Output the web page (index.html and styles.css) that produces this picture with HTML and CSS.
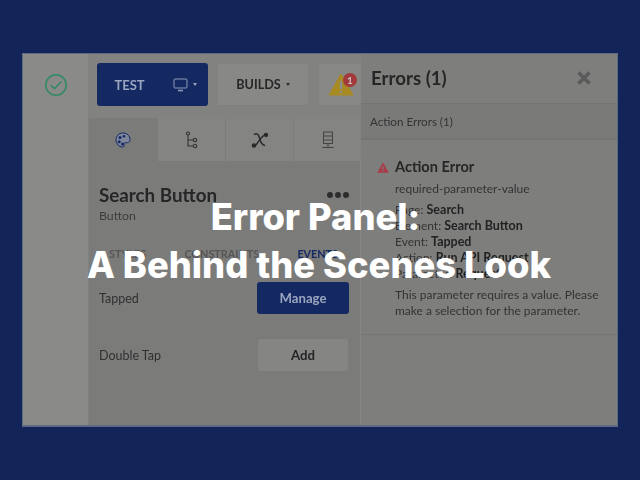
FILE: index.html
```html
<!DOCTYPE html>
<html lang="en">
<head>
<meta charset="utf-8">
<title>Error Panel: A Behind the Scenes Look</title>
<link rel="stylesheet" href="styles.css">
</head>
<body>
<div class="frame">
  <div class="topbar">
    <div class="status">
      <svg width="24" height="24" viewBox="0 0 24 24" fill="none" stroke="#2f8a62" stroke-width="1.5"><circle cx="12" cy="12" r="10.2"/><path d="M6.8 12.2l3.6 3.6 7-7.2"/></svg>
    </div>
    <div class="test">
      <span class="test-label">TEST</span>
      <span class="test-device">
        <svg width="16" height="14" viewBox="0 0 16 14" fill="none" stroke="#8d9ab8" stroke-width="1"><rect x="1" y="1" width="13" height="9" rx="1"/><path d="M5 12.5h5" stroke-width="1.6"/></svg>
        <i class="caret caret-light"></i>
      </span>
    </div>
    <div class="builds">BUILDS <i class="caret"></i></div>
    <div class="alert">
      <svg width="26" height="23" viewBox="0 0 26 23"><path d="M13 1L25 22H1z" fill="#a88a22" stroke="#a88a22" stroke-linejoin="round"/><path d="M13 8v8" stroke="#8d8d8d" stroke-width="2.4"/><circle cx="13" cy="19" r="1.3" fill="#8d8d8d"/></svg>
      <span class="badge">1</span>
    </div>
  </div>
  <div class="rail"></div>
  <div class="inspector">
    <div class="tabs">
      <div class="tab tab-active">
        <svg width="16" height="16" viewBox="0 0 16 16"><path d="M8 1C3.5 1 1 4.300 1 8s3 7 6.500 7c2 0 1.800-1.600 1.500-2.600-.3-1.100.5-1.900 1.800-1.700 2 .3 4.200-.2 4.200-3C15 3.600 12 1 8 1z" fill="#7d8599" stroke="#16296a"/><circle cx="5" cy="5.500" r="1.500" fill="#16296a"/><circle cx="9" cy="4.200" r="1.300" fill="#16296a"/><circle cx="4.200" cy="9.800" r="1.500" fill="#16296a"/><circle cx="7.500" cy="12" r="1.500" fill="#16296a"/></svg>
      </div>
      <div class="tab">
        <svg width="14" height="18" viewBox="0 0 14 18" fill="none" stroke="#333" stroke-width="1.100"><circle cx="3" cy="2.500" r="1.500"/><path d="M3 4v11h5M3 9h5"/><circle cx="10" cy="9" r="1.700"/><circle cx="10" cy="15" r="1.700"/></svg>
      </div>
      <div class="tab tab-var">
        <svg width="18" height="16" viewBox="0 0 18 16" fill="none" stroke="#2a2a2a" stroke-width="1.500"><path d="M3 2.500c3-1.500 4.500-.5 5.500 3.500s2 7 5.500 7.500"/><path d="M15 2.500C11 3 8 9 5 13"/><circle cx="3" cy="13.500" r="1.600" fill="#2a2a2a"/><circle cx="15" cy="3" r="1.400" fill="#2a2a2a"/></svg>
      </div>
      <div class="tab">
        <svg width="14" height="18" viewBox="0 0 14 18" fill="none" stroke="#444" stroke-width="1"><rect x="2.500" y="1" width="9" height="11.500"/><path d="M2.500 5h9M2.500 9h9M7 12.500V16M1.500 16.500h11"/></svg>
      </div>
    </div>
    <div class="element">
      <div class="element-head">
        <div class="element-name">Search Button</div>
        <div class="dots"><i></i><i></i><i></i></div>
      </div>
      <div class="element-type">Button</div>
      <div class="subtabs">
        <span>STYLES</span>
        <span>CONSTRAINTS</span>
        <span class="subtab-on">EVENTS</span>
      </div>
      <div class="event-row event-first">
        <span>Tapped</span>
        <span class="btn btn-blue">Manage</span>
      </div>
      <div class="event-row">
        <span>Double Tap</span>
        <span class="btn btn-plain">Add</span>
      </div>
    </div>
  </div>
  <aside class="errors">
    <div class="errors-head">
      <span class="errors-title">Errors (1)</span>
      <svg width="14" height="14" viewBox="0 0 14 14" stroke="#5a5a5a" stroke-width="3.600"><path d="M1.500 1.500l11 11M12.500 1.500l-11 11"/></svg>
    </div>
    <div class="errors-sub">Action Errors (1)</div>
    <div class="error-card">
      <div class="error-title">
        <svg width="12" height="11" viewBox="0 0 12 11"><path d="M6 .5L11.800 10.800H.2z" fill="#a83b48"/><path d="M6 4v3.500" stroke="#7d7d7d" stroke-width="1.200"/><circle cx="6" cy="9" r=".7" fill="#7d7d7d"/></svg>
        <span>Action Error</span>
      </div>
      <div class="error-body">
        <p class="error-code">required-parameter-value</p>
        <ul class="error-facts">
          <li>Page: <b>Search</b></li>
          <li>Element: <b>Search Button</b></li>
          <li>Event: <b>Tapped</b></li>
          <li>Action: <b>Run API Request</b></li>
          <li>Parameter: <b>Request</b></li>
        </ul>
        <p class="error-msg">This parameter requires a value. Please make a selection for the parameter.</p>
      </div>
    </div>
  </aside>
</div>
<h1 class="headline"><span class="headline-first">Error Panel:</span><span>A Behind the Scenes Look</span></h1>
</body>
</html>
```
FILE: styles.css
```css
* { box-sizing: border-box; }
html, body { margin: 0; height: 100%; }
body {
  background: #122458;
  padding: 53px 22px;
  overflow: hidden;
  font-family: Lato, "Noto Sans", sans-serif;
  color: #262626;
  position: relative;
}
.frame {
  width: 596px;
  height: 374px;
  background: #8a8a88;
  border: 2px solid #5d6a85;
  border-width: 1px 1px 2px 1px;
  display: grid;
  grid-template-columns: 65px 273px 1fr;
  grid-template-rows: 64px 1fr;
  filter: blur(0.5px);
}
.topbar {
  grid-column: 1 / 3;
  display: flex;
  align-items: center;
  padding-bottom: 3px;
  background: #828281;
}
.status {
  width: 65px;
  align-self: stretch;
  margin-bottom: -3px;
  padding-bottom: 3px;
  background: #8a8a88;
  display: flex;
  align-items: center;
  justify-content: center;
}
.test {
  margin-left: 9px;
  width: 111px;
  height: 43px;
  border-radius: 3px;
  background: #142862;
  color: #9aa5bf;
  font-weight: 700;
  font-size: 13px;
  display: flex;
  align-items: center;
}
.test-label { width: 65px; text-align: center; }
.test-device { display: flex; align-items: center; gap: 4px; padding-left: 11px; }
.caret {
  display: inline-block;
  width: 0;
  height: 0;
  border: 2.5px solid transparent;
  border-top: 3px solid #2a2a2a;
  border-bottom: 0;
  vertical-align: middle;
}
.caret-light { border-top-color: #9aa5bf; }
.builds {
  margin-left: 10px;
  width: 90px;
  height: 41px;
  background: #888887;
  box-shadow: 0 0 1px #7a7a7a;
  font-weight: 700;
  font-size: 12.600px;
  display: flex;
  align-items: center;
  justify-content: center;
  gap: 5px;
}
.alert {
  margin-left: 11px;
  flex: 1;
  height: 41px;
  background: #888887;
  position: relative;
  display: flex;
  align-items: center;
  padding-left: 9px;
}
.badge {
  position: absolute;
  left: 24px;
  top: 9px;
  width: 14px;
  height: 14px;
  border-radius: 50%;
  background: #a23a3c;
  color: #c9c0c0;
  font-size: 10px;
  font-weight: 700;
  line-height: 14px;
  text-align: center;
}
.rail { background: #8a8a88; }
.inspector {
  background: #7b7c7a;
  border-left: 1px solid #818181;
  border-right: 1px solid #868686;
  display: flex;
  flex-direction: column;
}
.tabs { display: flex; height: 43px; }
.tab {
  flex: 0 0 68px;
  background: #848483;
  border-left: 1px solid #7b7b7b;
  display: flex;
  align-items: center;
  justify-content: center;
}
.tab-active { background: #7b7c7a; border-left: 0; }
.element { padding: 22px 10px 0 10px; }
.element-head { display: flex; justify-content: space-between; align-items: center; padding-right: 1px; }
.element-name { font-size: 18.800px; font-weight: 700; line-height: 24px; }
.dots { display: flex; gap: 2px; }
.dots i { width: 6px; height: 6px; border-radius: 50%; background: #2c2c2c; }
.element-type { font-size: 12.300px; line-height: 16px; margin-top: 1px; color: #3c3c3c; }
.subtabs {
  display: flex;
  justify-content: space-between;
  margin: 22px 12px 0 10px;
  font-size: 10.800px;
  font-weight: 700;
  line-height: 16px;
  color: #555;
}
.subtab-on { color: #142862; }
.event-row {
  display: flex;
  justify-content: space-between;
  align-items: center;
  font-size: 12.500px;
  color: #303030;
  height: 32px;
}
.event-first { margin-top: 20px; margin-bottom: 25px; }
.btn {
  width: 92px;
  height: 32px;
  border-radius: 3px;
  display: flex;
  align-items: center;
  justify-content: center;
  font-size: 13.200px;
  font-weight: 700;
}
.btn-blue { background: #142862; color: #9aa5bf; margin-left: -1px; margin-right: 1px; }
.btn-plain { background: #858584; color: #242424; width: 90px; margin-right: 2px; }
.errors {
  grid-column: 3;
  grid-row: 1 / 3;
  background: #7e7e7d;
  display: flex;
  flex-direction: column;
}
.errors-head {
  height: 50px;
  flex: none;
  display: flex;
  align-items: center;
  justify-content: space-between;
  padding: 0 26px 2px 10px;
  border-bottom: 1px solid #747474;
}
.errors-title { font-size: 18.700px; font-weight: 700; }
.errors-sub {
  flex: none;
  height: 36px;
  padding-left: 9px;
  display: flex;
  align-items: center;
  font-size: 11.600px;
  color: #343434;
  background: #7a7a79;
  border-bottom: 2px solid #747474;
}
.error-card { padding: 17px 10px 0 16px; border-bottom: 1px solid #747474; height: 195px; flex: none; }
.error-title { display: flex; align-items: center; gap: 6px; font-size: 14.600px; font-weight: 700; line-height: 20px; }
.error-body { padding-left: 18px; font-size: 12px; line-height: 16px; color: #333; }
.error-code { margin: 4px 0 5px; }
.error-facts { list-style: none; margin: 0 0 5px; padding: 0; }
.error-facts b { font-size: 12.500px; font-weight: 700; color: #222; }
.error-msg { margin: 0; }
.headline {
  position: absolute;
  left: 0;
  right: 0;
  top: 193px;
  margin: 0;
  padding-right: 2px;
  text-align: center;
  font-family: Inter, "Open Sans", sans-serif;
  font-size: 36.300px;
  font-weight: 800;
  line-height: 48px;
  color: #fff;
}
.headline span { display: block; }
.headline .headline-first { padding-right: 7px; }
```
